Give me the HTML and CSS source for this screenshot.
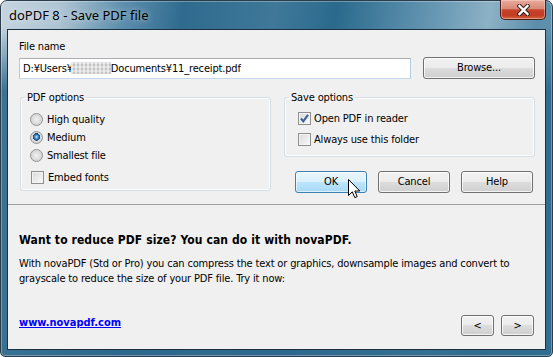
FILE: index.html
```html
<!DOCTYPE html>
<html>
<head>
<meta charset="utf-8">
<link rel="stylesheet" href="styles.css">
</head>
<body>
<div class="window">
  <div class="titlebar">
    <span class="title">doPDF 8 - Save PDF file</span>
    <div class="close">
      <svg width="13" height="12" viewBox="0 0 13 12"><path d="M2.5 2 L10.5 10 M10.5 2 L2.5 10" stroke="#3a1e18" stroke-width="4.4" stroke-linecap="square"/><path d="M2.5 2 L10.5 10 M10.5 2 L2.5 10" stroke="#fff" stroke-width="2.4" stroke-linecap="square"/></svg>
    </div>
  </div>
  <div class="client">
    <div class="main">
      <div class="lbl">File name</div>
      <div class="path-row">
        <div class="input">D:¥Users¥<span class="blur"></span>Documents¥11_receipt.pdf</div>
        <button class="btn browse">Browse...</button>
      </div>
      <div class="options-row">
        <fieldset class="group pdf">
          <legend>PDF options</legend>
          <div class="opt"><span class="radio"></span>High quality</div>
          <div class="opt"><span class="radio on"></span>Medium</div>
          <div class="opt"><span class="radio"></span>Smallest file</div>
          <div class="opt embed"><span class="check"></span>Embed fonts</div>
        </fieldset>
        <div class="right-col">
          <fieldset class="group save">
            <legend>Save options</legend>
            <div class="opt2"><span class="check on"><svg width="11" height="11" viewBox="0 0 11 11"><path d="M2 5.5 L4.3 8.3 L9 1.8" fill="none" stroke="#3b5f98" stroke-width="2.1"/></svg></span>Open PDF in reader</div>
            <div class="opt2"><span class="check"></span>Always use this folder</div>
          </fieldset>
          <div class="actions">
            <button class="btn default">OK<svg class="cursor" width="13" height="20" viewBox="0 0 13 20"><path d="M0.5 0.5 V16.5 L4.3 12.8 L6.8 18.6 L9.2 17.6 L6.8 12 H11.8 Z" fill="#fff" stroke="#000" stroke-width="1" stroke-linejoin="miter"/></svg></button>
            <button class="btn">Cancel</button>
            <button class="btn">Help</button>
          </div>
        </div>
      </div>
    </div>
    <div class="promo">
      <h2>Want to reduce PDF size? You can do it with novaPDF.</h2>
      <p>With novaPDF (Std or Pro) you can compress the text or graphics, downsample images and convert to<br>grayscale to reduce the size of your PDF file. Try it now:</p>
      <div class="promo-foot">
        <a class="link" href="#">www.novapdf.com</a>
        <div class="nav">
          <button class="btn small">&lt;</button>
          <button class="btn small">&gt;</button>
        </div>
      </div>
    </div>
  </div>
</div>
</body>
</html>
```

FILE: styles.css
```css
body {
  margin: 0;
  background: #fff;
  font-family: "DejaVu Sans Condensed", "Liberation Sans", sans-serif;
  font-size: 11px;
  letter-spacing: -0.16px;
  color: #000;
}

.window {
  box-sizing: border-box;
  width: 553px;
  height: 357px;
  border: 1px solid #2b3c4a;
  border-radius: 7px 7px 5px 5px;
  padding: 0 6px 6px;
  display: flex;
  flex-direction: column;
  background:
    linear-gradient(to bottom, rgba(44, 104, 140, 0) 0, rgba(44, 104, 140, 0) 26px, rgba(44, 104, 140, 0.9) 90px),
    linear-gradient(100deg, #c6d5e0 0%, #aec4d3 10%, #5e8fad 20%, #2f6b8e 30%, #3f7899 45%, #2b6a8d 55%, #6a9ab5 72%, #8db1c5 80%, #5b8eab 88%, #6f9cb5 100%);
  box-shadow: inset 0 0 0 1px rgba(255, 255, 255, 0.3);
}

.titlebar {
  height: 28px;
  display: flex;
  justify-content: space-between;
  align-items: center;
  padding-left: 2px;
}

.title {
  font-family: "Noto Sans", "Liberation Sans", sans-serif;
  font-size: 13px;
  letter-spacing: 0;
  color: #000;
  text-shadow: 0 0 6px rgba(255, 255, 255, 0.7);
  margin-top: -1px;
}

.close {
  align-self: flex-start;
  margin-top: -1px;
  box-sizing: border-box;
  width: 46px;
  height: 20px;
  border: 1px solid #4a1e16;
  border-top: none;
  border-radius: 0 0 5px 5px;
  background: linear-gradient(#e9ab9c 0%, #d98a78 45%, #c5452c 52%, #c13b22 80%, #d5643f 100%);
  box-shadow: inset 0 0 0 1px rgba(255, 220, 210, 0.45);
  display: flex;
  align-items: center;
  justify-content: center;
}

.client {
  flex: 1;
  border: 1px solid #1b3142;
  background: #f0f0f0;
  display: flex;
  flex-direction: column;
}

.main {
  padding: 10px 10px 11px 11px;
}

.lbl {
  line-height: 13px;
  margin-bottom: 4px;
}

.path-row {
  display: flex;
  align-items: center;
  gap: 12px;
  height: 22px;
}

.input {
  box-sizing: border-box;
  width: 392px;
  height: 21px;
  background: #fff;
  border: 1px solid;
  border-color: #abadb3 #b7cde3 #c3d7ea #b7cde3;
  padding: 0 3px;
  line-height: 19px;
  white-space: nowrap;
}

.blur {
  display: inline-block;
  width: 40px;
  height: 12px;
  vertical-align: -2px;
  margin-left: -2px;
  background:
    repeating-linear-gradient(90deg, rgba(255, 255, 255, 0.5) 0 2px, rgba(0, 0, 0, 0) 2px 4px),
    repeating-linear-gradient(0deg, #c4c4c4 0 2px, #dadada 2px 4px);
}

.btn {
  box-sizing: border-box;
  font: inherit;
  letter-spacing: inherit;
  color: #000;
  border: 1px solid #707070;
  border-radius: 3px;
  background: linear-gradient(#f2f2f2 0%, #ebebeb 50%, #dddddd 50%, #cfcfcf 100%);
  box-shadow: inset 0 0 0 1px rgba(255, 255, 255, 0.75);
  padding: 0;
  height: 22px;
  width: 72px;
  line-height: 20px;
  text-align: center;
}

.browse {
  width: 112px;
}

.options-row {
  display: grid;
  grid-template-columns: 251px 251px;
  column-gap: 13px;
  margin: 12px 0 0 1px;
  align-items: start;
}

.group {
  margin: 0;
  border: 1px solid #d5dfe5;
  border-radius: 3px;
  box-shadow: inset 0 0 0 1px rgba(255, 255, 255, 0.8);
  min-width: 0;
}

.group legend {
  padding: 0 2px;
  line-height: 13px;
}

.pdf {
  padding: 6px 8px 4px 9px;
}

.pdf legend {
  margin-left: -5px;
}

.save {
  padding: 4px 8px 6px 13px;
}

.save legend {
  margin-left: -9px;
}

.opt {
  display: flex;
  align-items: center;
  height: 18px;
  gap: 4px;
}

.opt.embed {
  margin-top: 4px;
  padding-left: 1px;
}

.opt2 {
  display: flex;
  align-items: center;
  height: 21px;
  gap: 3px;
}

.radio {
  box-sizing: border-box;
  width: 13px;
  height: 13px;
  border-radius: 50%;
  border: 1px solid #8e8f8f;
  background: radial-gradient(circle at 50% 50%, #f0f0f0 0, #e2e2e2 3px, #d6d6d6 5px, #f6f6f6 6px);
  flex: none;
}

.radio.on {
  background:
    radial-gradient(circle at 50% 45%, #bfe3fb 0, #59a4de 1.4px, #1f63a3 2.8px, #123f6c 3.6px, rgba(0, 0, 0, 0) 3.8px),
    radial-gradient(circle at 50% 50%, #f0f0f0 0, #e2e2e2 3px, #d6d6d6 5px, #f6f6f6 6px);
}

.check {
  box-sizing: border-box;
  width: 13px;
  height: 13px;
  border: 1px solid #8e8f8f;
  background: linear-gradient(135deg, #d9d9d9 0%, #ededed 60%, #fbfbfb 100%);
  box-shadow: inset 0 0 0 1px #f4f4f4;
  flex: none;
  display: flex;
  align-items: center;
  justify-content: center;
}

.actions {
  display: flex;
  gap: 11px;
  margin: 14px 0 0 11px;
}

.default {
  position: relative;
  border-color: #3c7fb1;
  background: linear-gradient(#eaf6fd 0%, #d9f0fc 50%, #bee6fd 50%, #a7d9f5 100%);
  box-shadow: inset 0 0 0 1px rgba(255, 255, 255, 0.6);
}

.cursor {
  position: absolute;
  left: 52px;
  top: 7px;
}

.promo {
  flex: 1;
  border-top: 1px solid #a0a0a0;
  padding: 28px 11px 13px 11px;
  display: flex;
  flex-direction: column;
}

.promo h2 {
  margin: 0;
  font-size: 12px;
  font-weight: bold;
  letter-spacing: 0.1px;
  line-height: 15px;
}

.promo p {
  margin: 8px 0 0;
  line-height: 15px;
}

.promo-foot {
  margin-top: auto;
  display: flex;
  justify-content: space-between;
  align-items: flex-start;
}

.link {
  color: #0000ff;
  font-weight: bold;
  font-size: 11px;
  letter-spacing: 0;
  line-height: 15px;
  text-decoration: underline;
}

.nav {
  display: flex;
  gap: 7px;
}

.btn.small {
  width: 33px;
  height: 21px;
  line-height: 19px;
}
```
